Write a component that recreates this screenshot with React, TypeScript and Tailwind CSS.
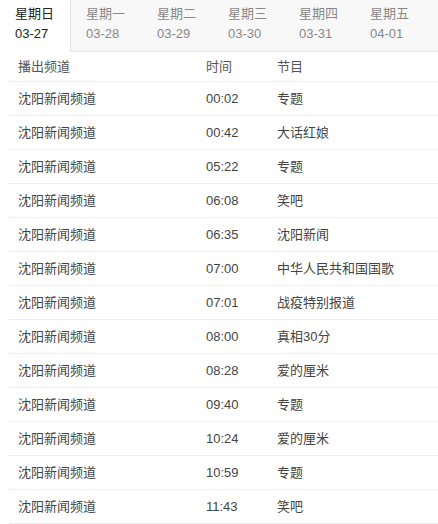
const tabs = [["星期日","03-27"],["星期一","03-28"],["星期二","03-29"],["星期三","03-30"],["星期四","03-31"],["星期五","04-01"]];
const rows: [string,string][] = [["00:02","专题"],["00:42","大话红娘"],["05:22","专题"],["06:08","笑吧"],["06:35","沈阳新闻"],["07:00","中华人民共和国国歌"],["07:01","战疫特别报道"],["08:00","真相30分"],["08:28","爱的厘米"],["09:40","专题"],["10:24","爱的厘米"],["10:59","专题"],["11:43","笑吧"]];
export default function App() {
  return (
    <div className="w-[438px] h-[524px] overflow-hidden bg-white text-[13px]" style={{fontFamily:'"Liberation Sans","Noto Sans CJK SC",sans-serif'}}>
      <div className="flex h-[52px] bg-[#f8f8f8]">
        {tabs.map(([d,t],i)=>(
          <div key={d} className={`w-[71px] shrink-0 pl-[15px] pt-[4px] leading-[19px] flex flex-col gap-[1px] ${i===0?"bg-white text-[#222] w-[69px] border-r border-[#e4e4e4]":"text-[#888] border-b border-[#e4e4e4]"}`}>
            <span>{d}</span><span>{t}</span>
          </div>
        ))}
        <div className="flex-1 border-b border-[#e4e4e4]" />
      </div>
      <div className="ml-[9px] text-[#555]">
        <div className="flex h-[30px] items-center border-b border-[#eee]">
          <span className="w-[197px] pl-[9px]">播出频道</span><span className="w-[71px]">时间</span><span>节目</span>
        </div>
        {rows.map(([t,p],i)=>(
          <div key={i} className="flex h-[34px] items-center border-b border-[#eee] text-[#444]">
            <span className="w-[197px] pl-[9px]">沈阳新闻频道</span><span className="w-[71px]">{t}</span><span>{p}</span>
          </div>
        ))}
      </div>
    </div>
  );
}
